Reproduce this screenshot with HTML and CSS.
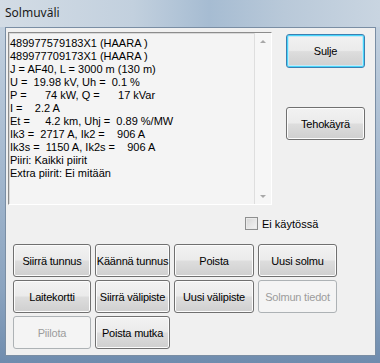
FILE: index.html
```html
<!DOCTYPE html>
<html lang="fi">
<head>
    <meta charset="UTF-8">
    <title>Solmuväli</title>
    <link rel="stylesheet" href="styles.css">
</head>
<body>
    <!-- Ikkunan otsikkorivi -->
    <div class="title-bar">Solmuväli</div>

    <div class="client">
        <div class="top-row">
            <!-- Tietolista -->
            <div class="info-box">
                <div class="info-text">489977579183X1 (HAARA )
489977709173X1 (HAARA )
J = AF40, L = 3000 m (130 m)
U =  19.98 kV, Uh =  0.1 %
P =      74 kW, Q =      17 kVar
I =    2.2 A
Et =     4.2 km, Uhj =  0.89 %/MW
Ik3 =  2717 A, Ik2 =    906 A
Ik3s =  1150 A, Ik2s =    906 A
Piiri: Kaikki piirit
Extra piirit: Ei mitään</div>
                <div class="scrollbar">
                    <span class="arrow up"></span>
                    <span class="arrow down"></span>
                </div>
            </div>

            <div class="side-buttons">
                <button class="btn default">Sulje</button>
                <button class="btn btn-curve">Tehokäyrä</button>
            </div>
        </div>

        <label class="check-row">
            <span class="checkbox"></span>
            Ei käytössä
        </label>

        <!-- Toimintopainikkeet -->
        <div class="button-grid">
            <button class="btn">Siirrä tunnus</button>
            <button class="btn">Käännä tunnus</button>
            <button class="btn">Poista</button>
            <button class="btn">Uusi solmu</button>
            <button class="btn">Laitekortti</button>
            <button class="btn">Siirrä välipiste</button>
            <button class="btn">Uusi välipiste</button>
            <button class="btn" disabled>Solmun tiedot</button>
            <button class="btn" disabled>Piilota</button>
            <button class="btn">Poista mutka</button>
        </div>
    </div>
</body>
</html>
```

FILE: styles.css
```css
/* Ikkunan runko */
body {
    margin: 0;
    width: 380px;
    height: 363px;
    overflow: hidden;
    background: linear-gradient(180deg, #c8d5e2 0%, #a9bcd1 40%, #8aa3bf 80%, #6f8cae 100%);
    font-family: "Liberation Sans", Arial, sans-serif;
    font-size: 11px;
    color: #000;
}

.title-bar {
    height: 27px;
    padding-left: 5px;
    line-height: 26px;
    font-family: "Noto Sans", "Open Sans", sans-serif;
    font-size: 12px;
    color: #1a1a1a;
    background: linear-gradient(90deg, #d3dce5 0%, #c2d0de 35%, #a6bcd2 55%, #b9c9d9 75%, #c9d5e1 100%);
}

.client {
    margin: 0 4px 0 5px;
    height: 327px;
    border: 1px solid #7a8ea4;
    background-color: #f0f0f0;
    padding: 4px 0 0 2px;
    box-sizing: border-box;
    height: 329px;
}

.top-row {
    display: flex;
    align-items: flex-start;
}

/* Tietolista */
.info-box {
    width: 264px;
    height: 173px;
    box-sizing: border-box;
    border: 1px solid;
    border-color: #8c8c8c #ffffff #ffffff #8c8c8c;
    box-shadow: inset 1px 1px 0 #d8d8d8;
    background-color: #f4f4f4;
    display: flex;
}

.info-text {
    flex: 1;
    padding: 4px 0 0 1px;
    white-space: pre;
    line-height: 13px;
    overflow: hidden;
}

.scrollbar {
    width: 16px;
    border-left: 1px solid #dedede;
    background-color: #f6f6f6;
    display: flex;
    flex-direction: column;
    justify-content: space-between;
    align-items: center;
    padding: 7px 0 6px;
}

.arrow {
    width: 0;
    height: 0;
    border-left: 3px solid transparent;
    border-right: 3px solid transparent;
}

.arrow.up {
    border-bottom: 3px solid #a8a8a8;
}

.arrow.down {
    border-top: 3px solid #a8a8a8;
}

.side-buttons {
    margin-left: 14px;
    display: flex;
    flex-direction: column;
}

/* Painikkeet */
.btn {
    width: 79px;
    height: 33px;
    padding: 0;
    font-family: "Liberation Sans", Arial, sans-serif;
    font-size: 11px;
    letter-spacing: -0.2px;
    color: #000;
    border: 1px solid #707070;
    border-radius: 3px;
    background: linear-gradient(180deg, #f2f2f2 0%, #ebebeb 48%, #dddddd 52%, #cfcfcf 100%);
    box-shadow: inset 0 0 0 1px #fcfcfc;
}

.btn.default {
    margin-top: 2px;
    height: 34px;
    border-color: #3c7fb1;
    box-shadow: inset 0 0 0 1px #48d6fb, inset 0 0 0 2px #c5e9f7;
}

.btn.btn-curve {
    margin-top: 39px;
}

.btn:disabled {
    color: #9c9c9c;
    border-color: #adb2b5;
    background: #f4f4f4;
    box-shadow: none;
}

/* Valintaruutu */
.check-row {
    display: flex;
    align-items: center;
    gap: 4px;
    margin: 12px 0 0 237px;
    height: 13px;
}

.checkbox {
    width: 11px;
    height: 11px;
    border: 1px solid #8e8f8f;
    background: linear-gradient(135deg, #d6d6d6 0%, #f4f4f4 100%);
    box-shadow: inset 0 0 0 1px #eaeaea;
}

.button-grid {
    display: grid;
    grid-template-columns: 78px 75px 80px 79px;
    column-gap: 4px;
    row-gap: 3px;
    margin: 14px 0 0 5px;
}

.button-grid .btn {
    width: auto;
}
```
